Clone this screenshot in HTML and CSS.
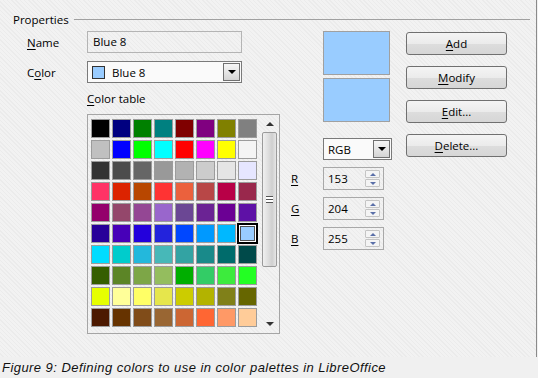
FILE: index.html
```html
<!DOCTYPE html>
<html lang="en">
<head>
    <meta charset="UTF-8">
    <title>Colors</title>
    <link rel="stylesheet" href="styles.css">
</head>
<body>
    <div class="dialog">
        <div class="legend"><span>Properties</span></div>
        <div class="content">
            <div class="left">
                <div class="field-row">
                    <span class="label"><u>N</u>ame</span>
                    <div class="textbox">Blue 8</div>
                </div>
                <div class="field-row">
                    <span class="label">C<u>o</u>lor</span>
                    <div class="listbox">
                        <span class="swatch"></span>
                        <span class="list-text">Blue 8</span>
                        <span class="drop-btn"><span class="tri-down"></span></span>
                    </div>
                </div>
                <div class="table-label"><u>C</u>olor table</div>
                <div class="color-table">
                    <div class="grid" id="grid"></div>
                    <div class="scrollbar">
                        <span class="arrow-up"></span>
                        <div class="thumb"><span class="grip"></span></div>
                        <span class="arrow-down"></span>
                    </div>
                </div>
            </div>
            <div class="middle">
                <div class="preview"></div>
                <div class="preview second"></div>
                <div class="select">
                    <span class="list-text">RGB</span>
                    <span class="drop-btn"><span class="tri-down"></span></span>
                </div>
                <div class="spin-row">
                    <span class="spin-label"><u>R</u></span>
                    <div class="spinbox"><span class="spin-text">153</span><span class="spin-btns"><span class="spin-btn"><span class="tri-up-s"></span></span><span class="spin-btn"><span class="tri-down-s"></span></span></span></div>
                </div>
                <div class="spin-row">
                    <span class="spin-label"><u>G</u></span>
                    <div class="spinbox"><span class="spin-text">204</span><span class="spin-btns"><span class="spin-btn"><span class="tri-up-s"></span></span><span class="spin-btn"><span class="tri-down-s"></span></span></span></div>
                </div>
                <div class="spin-row">
                    <span class="spin-label"><u>B</u></span>
                    <div class="spinbox"><span class="spin-text">255</span><span class="spin-btns"><span class="spin-btn"><span class="tri-up-s"></span></span><span class="spin-btn"><span class="tri-down-s"></span></span></span></div>
                </div>
            </div>
            <div class="right">
                <button class="btn"><u>A</u>dd</button>
                <button class="btn"><u>M</u>odify</button>
                <button class="btn"><u>E</u>dit...</button>
                <button class="btn"><u>D</u>elete...</button>
            </div>
        </div>
    </div>
    <p class="caption">Figure 9: Defining colors to use in color palettes in LibreOffice</p>

    <script>
        const palette = [
            '#000000', '#000080', '#008000', '#008080', '#800000', '#800080', '#808000', '#808080',
            '#c0c0c0', '#0000ff', '#00ff00', '#00ffff', '#ff0000', '#ff00ff', '#ffff00', '#f4f4f4',
            '#333333', '#4c4c4c', '#666666', '#999999', '#b2b2b2', '#cccccc', '#e5e5e5', '#e6e6ff',
            '#ff3366', '#dc2300', '#b84700', '#ff3333', '#eb613d', '#b84747', '#b80047', '#99284c',
            '#94006b', '#94476b', '#944794', '#9966cc', '#6b4794', '#6b2394', '#6b0094', '#5e11a6',
            '#280099', '#4700b8', '#2300dc', '#2323dc', '#0047ff', '#0099ff', '#00b8ff', '#99ccff',
            '#00dcff', '#00cccc', '#23b8dc', '#47b8b8', '#33a3a3', '#198a8a', '#006b6b', '#004a4a',
            '#355e00', '#5c8526', '#7da647', '#94bd5e', '#00ae00', '#33cc66', '#3deb3d', '#23ff23',
            '#e6ff00', '#ffff99', '#ffff66', '#e6e64c', '#cccc00', '#b3b300', '#808019', '#666600',
            '#4c1900', '#663300', '#804c19', '#996633', '#cc6633', '#ff6633', '#ff9966', '#ffcc99'
        ];
        const selected = 47;

        const grid = document.getElementById('grid');
        palette.forEach((color, index) => {
            const cell = document.createElement('div');
            cell.className = index === selected ? 'cell selected' : 'cell';
            cell.style.background = color;
            grid.appendChild(cell);
        });
    </script>
</body>
</html>
```

FILE: styles.css
```css
body {
    margin: 0;
    background-color: #f0f0f0;
    font-family: "Open Sans", "Noto Sans", sans-serif;
    font-size: 11.5px;
    color: #000;
}
u {
    text-decoration-thickness: 1px;
    text-underline-offset: 2px;
}
.dialog {
    width: 536px;
    height: 346px;
    padding-top: 11px;
    border-right: 1px solid #8a8a8a;
    background: repeating-linear-gradient(45deg, #f2f2f2 0, #f2f2f2 2px, #ebebeb 2px, #ebebeb 3px);
}
.legend {
    display: flex;
    align-items: center;
    height: 16px;
    padding-left: 13px;
    padding-right: 6px;
}
.legend::after {
    content: "";
    flex: 1;
    height: 1px;
    margin-left: 5px;
    background-color: #a0a0a0;
}
.content {
    display: flex;
    margin-top: 4px;
    padding-left: 27px;
}
.left {
    width: 253px;
}
.field-row {
    display: flex;
    align-items: center;
    height: 22px;
    margin-bottom: 8px;
}
.label {
    width: 60px;
}
.textbox {
    box-sizing: border-box;
    width: 155px;
    height: 22px;
    line-height: 20px;
    padding-left: 5px;
    border: 1px solid #b4b4b4;
}
.listbox,
.select {
    box-sizing: border-box;
    display: flex;
    align-items: center;
    height: 22px;
    border: 1px solid #7a7a7a;
    background-color: #fafafa;
}
.listbox {
    width: 155px;
    padding-left: 4px;
}
.swatch {
    box-sizing: border-box;
    width: 13px;
    height: 13px;
    margin-right: 7px;
    border: 1px solid #333;
    background-color: #99ccff;
}
.list-text {
    flex: 1;
}
.drop-btn {
    box-sizing: border-box;
    display: flex;
    align-items: center;
    justify-content: center;
    width: 17px;
    height: 18px;
    margin-right: 1px;
    border: 1px solid #707070;
    background: linear-gradient(#f6f6f6, #e6e6e6 50%, #d4d4d4);
}
.tri-down {
    width: 0;
    height: 0;
    border-left: 4px solid transparent;
    border-right: 4px solid transparent;
    border-top: 4px solid #000;
}
.table-label {
    height: 16px;
    line-height: 16px;
    margin-top: 2px;
    margin-left: 60px;
}
.color-table {
    box-sizing: border-box;
    display: flex;
    width: 193px;
    height: 220px;
    margin-top: 7px;
    margin-left: 60px;
    padding: 4px 2px 0 3px;
    border: 1px solid #a5a5a5;
}
.grid {
    display: grid;
    grid-template-columns: repeat(8, 19px);
    grid-auto-rows: 19px;
    gap: 2px;
    align-self: flex-start;
}
.cell {
    box-sizing: border-box;
    border: 1px solid #9c9c9c;
}
.cell.selected {
    border: 2px solid #000;
    margin: -1px;
    width: 21px;
    height: 21px;
    box-shadow: inset 0 0 0 1px #fff, inset 0 0 0 2px #505050;
}
.scrollbar {
    display: flex;
    flex-direction: column;
    align-items: center;
    width: 15px;
    margin-left: 5px;
    margin-top: -3px;
    height: 216px;
}
.arrow-up,
.arrow-down {
    width: 0;
    height: 0;
    border-left: 4px solid transparent;
    border-right: 4px solid transparent;
}
.arrow-up {
    margin-top: 6px;
    border-bottom: 4px solid #333;
}
.arrow-down {
    margin-top: auto;
    margin-bottom: 6px;
    border-top: 4px solid #333;
}
.thumb {
    box-sizing: border-box;
    display: flex;
    align-items: center;
    justify-content: center;
    width: 15px;
    height: 135px;
    margin-top: 6px;
    border: 1px solid #9a9a9a;
    border-radius: 2px;
    background: linear-gradient(90deg, #f0f0f0, #dcdcdc 45%, #cfcfcf 70%, #e6e6e6);
}
.grip {
    width: 7px;
    height: 5px;
    border-top: 1px solid #555;
    border-bottom: 1px solid #555;
    background: linear-gradient(#fff 0, #fff 2px, #555 2px, #555 3px, #fff 3px);
}
.middle {
    width: 101px;
    margin-left: 11px;
}
.preview {
    box-sizing: border-box;
    width: 67px;
    height: 44px;
    margin-left: 32px;
    border: 1px solid #a0a0a0;
    background-color: #99ccff;
}
.preview.second {
    margin-top: 3px;
}
.select {
    width: 69px;
    margin-top: 16px;
    margin-left: 32px;
    padding-left: 4px;
}
.spin-row {
    display: flex;
    align-items: center;
    height: 23px;
    margin-top: 7px;
}
.spin-label {
    width: 32px;
}
.spinbox {
    box-sizing: border-box;
    display: flex;
    align-items: center;
    width: 61px;
    height: 23px;
    padding-left: 4px;
    border: 1px solid #a8a8a8;
}
.spin-text {
    flex: 1;
}
.spin-btns {
    display: flex;
    flex-direction: column;
    gap: 1px;
    margin-right: 3px;
}
.spin-btn {
    box-sizing: border-box;
    display: flex;
    align-items: center;
    justify-content: center;
    width: 15px;
    height: 8px;
    border: 1px solid #c4c4c4;
    border-radius: 1px;
    background-color: #f4f4f4;
}
.tri-up-s,
.tri-down-s {
    width: 0;
    height: 0;
    border-left: 3px solid transparent;
    border-right: 3px solid transparent;
}
.tri-up-s {
    border-bottom: 3px solid #5a6fa8;
}
.tri-down-s {
    border-top: 3px solid #5a6fa8;
}
.right {
    display: flex;
    flex-direction: column;
    gap: 11px;
    margin-left: 14px;
    padding-top: 1px;
}
.btn {
    width: 101px;
    height: 23px;
    padding: 0;
    border: 1px solid #707070;
    border-radius: 3px;
    background: linear-gradient(#f4f4f4, #ebebeb 50%, #dddddd 51%, #d6d6d6);
    font-family: inherit;
    font-size: inherit;
    color: #000;
}
.caption {
    margin: 0;
    height: 21px;
    padding-left: 2px;
    line-height: 21px;
    font-family: "Liberation Sans", Arial, sans-serif;
    font-style: italic;
    font-size: 13px;
    letter-spacing: 0.45px;
    color: #111;
}
```
